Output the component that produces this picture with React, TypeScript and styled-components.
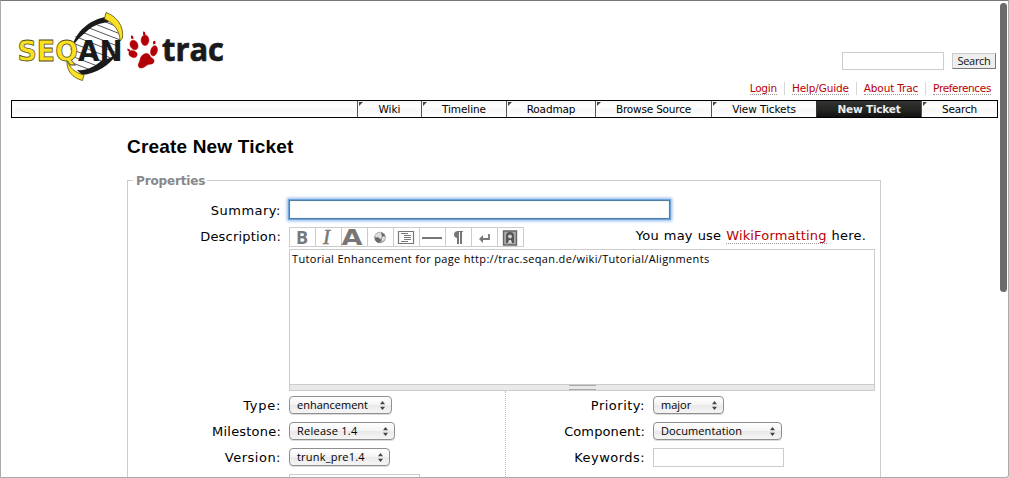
import React from 'react';
import styled, { createGlobalStyle, css } from 'styled-components';

const verdana = '"DejaVu Sans", Verdana, sans-serif';
const lucida = '"Open Sans", "Lucida Grande", sans-serif';

const GlobalStyle = createGlobalStyle`
  * { box-sizing: border-box; }
  body { margin: 0; background: #fff; color: #000; font-family: ${verdana}; }
`;

const Window = styled.div`
  position: relative;
  width: 1009px;
  height: 478px;
  overflow: hidden;
  background: #fff;
  border: 1px solid #ababab;
  border-top-color: #777;
  border-bottom-right-radius: 3px;
`;
const ScrollThumb = styled.div`
  position: absolute;
  top: 2px;
  right: 1px;
  width: 7px;
  height: 289px;
  border-radius: 4px;
  background: #6b6b6b;
`;
const Header = styled.header`
  display: flex;
  justify-content: space-between;
  height: 99px;
  padding: 0 12px 0 10px;
`;
const Logo = styled.svg`
  display: block;
  width: 220px;
  height: 90px;
`;
const Tools = styled.div`
  display: flex;
  flex-direction: column;
  align-items: flex-end;
  padding-top: 51px;
`;
const SearchForm = styled.div`
  display: flex;
  align-items: center;
  gap: 8px;
  height: 18px;
`;
const Input = styled.input<{ $w: number; $h: number }>`
  display: block;
  width: ${p => p.$w}px;
  height: ${p => p.$h}px;
  margin: 0;
  padding: 0 3px;
  border: 1px solid #ccc;
  border-radius: 0;
  background: #fff;
  outline: none;
  font: 11px ${lucida};
`;
const SummaryInput = styled(Input)`
  border: 1px solid #4f7fa8;
  box-shadow: 0 0 0 1px #6ea5dc, 0 0 3px 2px #8cb8e8, inset 0 0 1px #9bb;
`;
const SearchButton = styled.button`
  width: 44px;
  height: 16px;
  padding: 0 0 1px;
  border: 1px solid #ccc;
  border-right-color: #777;
  border-bottom-color: #777;
  background: #eee;
  color: #111;
  font: 11px/12px ${lucida};
  letter-spacing: -0.3px;
`;
const MetaNav = styled.nav`
  display: flex;
  margin-top: 12px;
  padding-right: 5px;
`;
const MetaItem = styled.span`
  display: flex;
  height: 13px;
  & + & { margin-left: 7px; padding-left: 7px; border-left: 1px solid #d7d7d7; }
`;
const Link = styled.a<{ $spacing?: number }>`
  color: #b00;
  border-bottom: 1px dotted #999;
  letter-spacing: ${p => p.$spacing ?? 0}px;
`;
const MetaLink = styled(Link)`
  height: 13px;
  font-size: 10.5px;
  line-height: 12px;
  white-space: nowrap;
`;
const MainNav = styled.nav`
  display: flex;
  justify-content: flex-end;
  width: 987px;
  height: 18px;
  margin-left: 10px;
  border: 1px solid #000;
  background: linear-gradient(#f5f5f5, #fff 30%, #f7f7f7 60%, #fff);
`;
const Tab = styled.a<{ $w: number; $active?: boolean; $spacing?: number }>`
  position: relative;
  width: ${p => p.$w}px;
  height: 16px;
  border-left: 1px solid #555;
  font-size: 10.5px;
  line-height: 17px;
  text-align: center;
  white-space: nowrap;
  letter-spacing: ${p => p.$spacing ?? 0}px;
  ${p => p.$active ? css`
    background: linear-gradient(#333, #22241f 60%, #111);
    border-color: #333;
    color: #eee;
    font-weight: bold;
  ` : css`
    &::before {
      content: '';
      position: absolute;
      left: 1px;
      top: 1px;
      border-top: 4px solid #444;
      border-right: 4px solid transparent;
    }
  `}
`;
const Content = styled.main`
  width: 754px;
  margin: 0 0 0 126px;
`;
const Title = styled.h1`
  height: 62px;
  margin: 0;
  padding-top: 17px;
  font: bold 19px/24px "Liberation Sans", Arial, sans-serif;
  letter-spacing: 0.18px;
`;
const Properties = styled.section`
  height: 310px;
  border: 1px solid #ccc;
`;
const Legend = styled.h2`
  width: 74px;
  height: 14px;
  margin: -7px 0 0 5px;
  padding-left: 3px;
  background: #fff;
  color: #888;
  font: bold 12px/14px ${verdana};
  letter-spacing: -0.15px;
`;
const Field = styled.div<{ $labelW: number; $h: number }>`
  display: grid;
  grid-template-columns: ${p => p.$labelW}px auto;
  justify-content: start;
  column-gap: 8px;
  align-items: center;
  height: ${p => p.$h}px;
`;
const Label = styled.label<{ $spacing?: number }>`
  font-size: 13px;
  line-height: 18px;
  text-align: right;
  white-space: nowrap;
  letter-spacing: ${p => p.$spacing ?? 0}px;
`;
const SummaryRow = styled.div`
  padding: 9px 0 2px;
`;
const SummaryField = styled(Field)`
  align-items: start;
  padding-top: 3px;
  ${Label} { padding-top: 2px; }
`;
const DescriptionRow = styled.div`
  display: flex;
  justify-content: space-between;
  margin-top: -1px;
  padding-right: 14px;
`;
const Toolbar = styled.div`
  display: flex;
  width: 235px;
  height: 20px;
  border: 1px solid #ccc;
`;
const Tool = styled.span`
  width: 26px;
  height: 18px;
  & + & { border-left: 1px solid #ccc; }
  svg { display: block; width: 25px; height: 18px; overflow: visible; }
`;
const Hint = styled.span`
  padding-top: 4px;
  font-size: 13px;
  line-height: 16px;
  white-space: nowrap;
  letter-spacing: 0.2px;
  word-spacing: 0.6px;
`;
const HintLink = styled(Link)`
  display: inline-block;
  height: 16px;
`;
const Editor = styled.div`
  width: 586px;
  height: 142px;
  margin: -1px 0 0 161px;
  border: 1px solid #ccc;
  display: flex;
  flex-direction: column;
`;
const EditorText = styled.div`
  flex: 1;
  padding: 0 2px;
  font: 11px/17px ${lucida};
  letter-spacing: 0.335px;
  white-space: nowrap;
`;
const Grip = styled.div`
  display: flex;
  justify-content: center;
  align-items: center;
  height: 6px;
  border-top: 1px solid #ccc;
  background: #e9e9e9;
  &::before {
    content: '';
    width: 27px;
    height: 3px;
    border: solid #aaa;
    border-width: 1px 0;
  }
`;
const Columns = styled.div`
  display: grid;
  grid-template-columns: 377px 1fr;
`;
const Column = styled.div`
  height: 100px;
  padding-top: 1px;
  & + & { border-left: 1px dotted #bbb; }
  ${Label} { padding-top: 2px; }
`;
const SelectBox = styled.div<{ $w: number; $spacing?: number }>`
  display: flex;
  align-items: center;
  justify-content: space-between;
  width: ${p => p.$w}px;
  height: 18px;
  padding: 0 6px 0 7px;
  border: 1px solid #8f8f8f;
  border-radius: 4px;
  background: linear-gradient(#fff, #f4f4f4 50%, #e9e9e9 51%, #f5f5f5);
  box-shadow: 0 1px 0 #ddd;
  font: 11px/16px ${lucida};
  white-space: nowrap;
  letter-spacing: ${p => p.$spacing ?? 0}px;
  svg { width: 5px; height: 9px; }
`;

function Select({ w, spacing, children }: { w: number; spacing?: number; children: string }) {
  return (
    <SelectBox $w={w} $spacing={spacing}>
      <span>{children}</span>
      <svg viewBox="0 0 5 9"><path d="M2.5 0L5 3.3H0ZM2.5 9L0 5.7H5Z" fill="#444" /></svg>
    </SelectBox>
  );
}

function SeqanLogo() {
  return (
    <Logo viewBox="11 1 220 90">
      <defs>
        <clipPath id="helix">
          <path d="M71 62C66 42 79 25 106 18L121 32C124 51 107 71 84 74Z" />
        </clipPath>
      </defs>
      <path d="M71 62C66 42 79 25 106 18L121 32C124 51 107 71 84 74Z" fill="#fff" />
      <g clipPath="url(#helix)" stroke="#444" strokeWidth=".9">
        <path d="M98 19l30 12M90 22l38 15M84 26l44 17M79 31l46 18M74 36l46 18M70 42l46 18M68 48l44 17M66 54l42 16M65 60l36 14M64 66l30 12" />
      </g>
      <path d="M72 47C76 31 90 20 105 17L109 22C99 23 92 26 86 32C81 36 76 41 72 47Z" fill="#1a1a1a" />
      <path d="M117 54C110 65 96 74 82 75L77 70C86 71 94 67 101 61L110 58Z" fill="#1a1a1a" />
      <path d="M106 12.500C116 16 124 25 122.500 38L120 41C120 31 114 23 104.500 19Z" fill="#fbe122" stroke="#55501b" strokeWidth=".8" />
      <path d="M67 60C69 67 75 73 84 75L82.500 80.500C72 78 66 70 67 60Z" fill="#fbe122" stroke="#55501b" strokeWidth=".8" />
      <text x="17.500" y="61" fontFamily="DejaVu Sans" fontWeight="bold" fontSize="29" textLength="60.500" lengthAdjust="spacingAndGlyphs" fill="#fbe122" stroke="#55501b" strokeWidth=".8">SEQ</text>
      <text x="78" y="61" fontFamily="DejaVu Sans" fontWeight="bold" fontSize="29" textLength="44.500" lengthAdjust="spacingAndGlyphs" fill="#1a1a1a">AN</text>
      <g fill="#b30006" stroke="#b30006" strokeWidth=".5">
        <ellipse cx="134" cy="45" rx="3.800" ry="5" transform="rotate(-25 134 45)" />
        <ellipse cx="145" cy="40.300" rx="3.900" ry="5.300" />
        <ellipse cx="154" cy="50.800" rx="3.300" ry="5.200" transform="rotate(15 154 50.800)" />
        <ellipse cx="133" cy="54" rx="4.300" ry="3.200" transform="rotate(25 133 54)" />
        <path d="M138.500 66.500C137.500 64 139.500 62.500 140 60C140.500 56 143.500 53.500 146.500 53.500C149.500 53.500 150 56 151 57.500C152.500 58.500 154.500 59 154 61.500C153.500 64.500 150.500 64 148.500 64.500C146 65 144.500 68 141.500 68C140 68 139 67.500 138.500 66.500Z" />
        <path d="M131 35.500l2 .5.500 3-2.500-.5ZM143 31.500l2 .5.500 3.500-2.300-.5ZM153 41.500l2.300-1 .2 3.200-2.300.8ZM127.300 48.500l2.400.8.500 2.600-2.500-1Z" stroke="none" />
      </g>
      <text x="162" y="60.500" fontFamily="Open Sans" fontWeight="bold" fontSize="32" textLength="62" lengthAdjust="spacingAndGlyphs" fill="#1a1a1a" stroke="#1a1a1a" strokeWidth=".7">trac</text>
    </Logo>
  );
}

const glyphs = [
  <text x="6" y="15.500" fontFamily="Open Sans" fontWeight="bold" fontSize="18" fill="#777">B</text>,
  <text x="7" y="15.500" fontFamily="Liberation Serif" fontStyle="italic" fontSize="21" fill="#777" stroke="#777" strokeWidth=".5">I</text>,
  <text x="-.5" y="16.500" fontFamily="DejaVu Sans" fontWeight="bold" fontSize="21" textLength="21" lengthAdjust="spacingAndGlyphs" fill="#777">A</text>,
  <g><circle cx="12" cy="9.500" r="5.800" fill="#999" /><path d="M7 7q5-5 9-1l-4 5-3 1ZM14 8l4 2-4 4Z" fill="#ddd" /><path d="M7 10l3-1 3 3-2 3q-4-1-4-5ZM13 4l4 3-3 2Z" fill="#666" /></g>,
  <g stroke="#777" fill="none"><path d="M4.500 3.500h15v12h-15Z" strokeWidth="1.200" /><path d="M7 5.500h7M10 7.500h7M10 9.500h7M10 11.500h7M7 13.500h7" /></g>,
  <path d="M2 9h20v2H2Z" fill="#777" />,
  <path d="M17 3v1h-1v12h-2V4h-1v12h-2v-6Q8 9.500 8 6.500 8 3 12 3Z" fill="#777" />,
  <g fill="none" stroke="#777" strokeWidth="1.800"><path d="M17 6v5H9" /><path d="M11 7l-4 4 4 4Z" fill="#777" stroke="none" /></g>,
  <g><path d="M5.500 3h13v14h-13Z" fill="#aaa" stroke="#666" strokeWidth="1.400" /><path d="M8 15V8q0-4 4-4t4 4v7h-3v-2h-2v2Z" fill="#555" /><circle cx="12" cy="8.500" r="2" fill="#ccc" /><path d="M10 15l1-3h2l1 3Z" fill="#ddd" /></g>,
];

export default function App() {
  return (
    <Window>
      <GlobalStyle />
      <Header>
        <SeqanLogo />
        <Tools>
          <SearchForm>
            <Input $w={102} $h={18} aria-label="Search" />
            <SearchButton>Search</SearchButton>
          </SearchForm>
          <MetaNav>
            <MetaItem><MetaLink $spacing={-0.2}>Login</MetaLink></MetaItem>
            <MetaItem><MetaLink $spacing={-0.15}>Help/Guide</MetaLink></MetaItem>
            <MetaItem><MetaLink $spacing={-0.15}>About Trac</MetaLink></MetaItem>
            <MetaItem><MetaLink $spacing={-0.35}>Preferences</MetaLink></MetaItem>
          </MetaNav>
        </Tools>
      </Header>
      <MainNav>
        <Tab $w={64}>Wiki</Tab>
        <Tab $w={85} $spacing={-0.1}>Timeline</Tab>
        <Tab $w={89} $spacing={-0.15}>Roadmap</Tab>
        <Tab $w={116} $spacing={-0.2}>Browse Source</Tab>
        <Tab $w={105} $spacing={-0.1}>View Tickets</Tab>
        <Tab $w={105} $spacing={-0.2} $active>New Ticket</Tab>
        <Tab $w={76} $spacing={-0.2}>Search</Tab>
      </MainNav>
      <Content>
        <Title>Create New Ticket</Title>
        <Properties>
          <Legend>Properties</Legend>
          <SummaryRow>
            <SummaryField $labelW={153} $h={26}>
              <Label $spacing={0.5}>Summary:</Label>
              <SummaryInput $w={381} $h={19} aria-label="Summary" />
            </SummaryField>
          </SummaryRow>
          <DescriptionRow>
            <Field $labelW={153} $h={26}>
              <Label $spacing={0.2}>Description:</Label>
              <Toolbar>
                {glyphs.map((g, i) => <Tool key={i}><svg viewBox="0 0 25 18">{g}</svg></Tool>)}
              </Toolbar>
            </Field>
            <Hint>You may use <HintLink $spacing={0.15}>WikiFormatting</HintLink> here.</Hint>
          </DescriptionRow>
          <Editor>
            <EditorText>Tutorial Enhancement for page http://trac.seqan.de/wiki/Tutorial/Alignments</EditorText>
            <Grip />
          </Editor>
          <Columns>
            <Column>
              <Field $labelW={153} $h={26}><Label $spacing={0.7}>Type:</Label><Select w={103}>enhancement</Select></Field>
              <Field $labelW={153} $h={26}><Label $spacing={0.2}>Milestone:</Label><Select w={106} spacing={0.25}>Release 1.4</Select></Field>
              <Field $labelW={153} $h={26}><Label $spacing={0.5}>Version:</Label><Select w={101} spacing={0.2}>trunk_pre1.4</Select></Field>
              <Field $labelW={153} $h={26}><span /><Input $w={131} $h={19} aria-label="Cc" /></Field>
            </Column>
            <Column>
              <Field $labelW={139} $h={26}><Label $spacing={0.5}>Priority:</Label><Select w={71}>major</Select></Field>
              <Field $labelW={139} $h={26}><Label $spacing={0.1}>Component:</Label><Select w={129} spacing={0.1}>Documentation</Select></Field>
              <Field $labelW={139} $h={26}><Label $spacing={0.45}>Keywords:</Label><Input $w={131} $h={19} aria-label="Keywords" /></Field>
            </Column>
          </Columns>
        </Properties>
      </Content>
      <ScrollThumb />
    </Window>
  );
}
